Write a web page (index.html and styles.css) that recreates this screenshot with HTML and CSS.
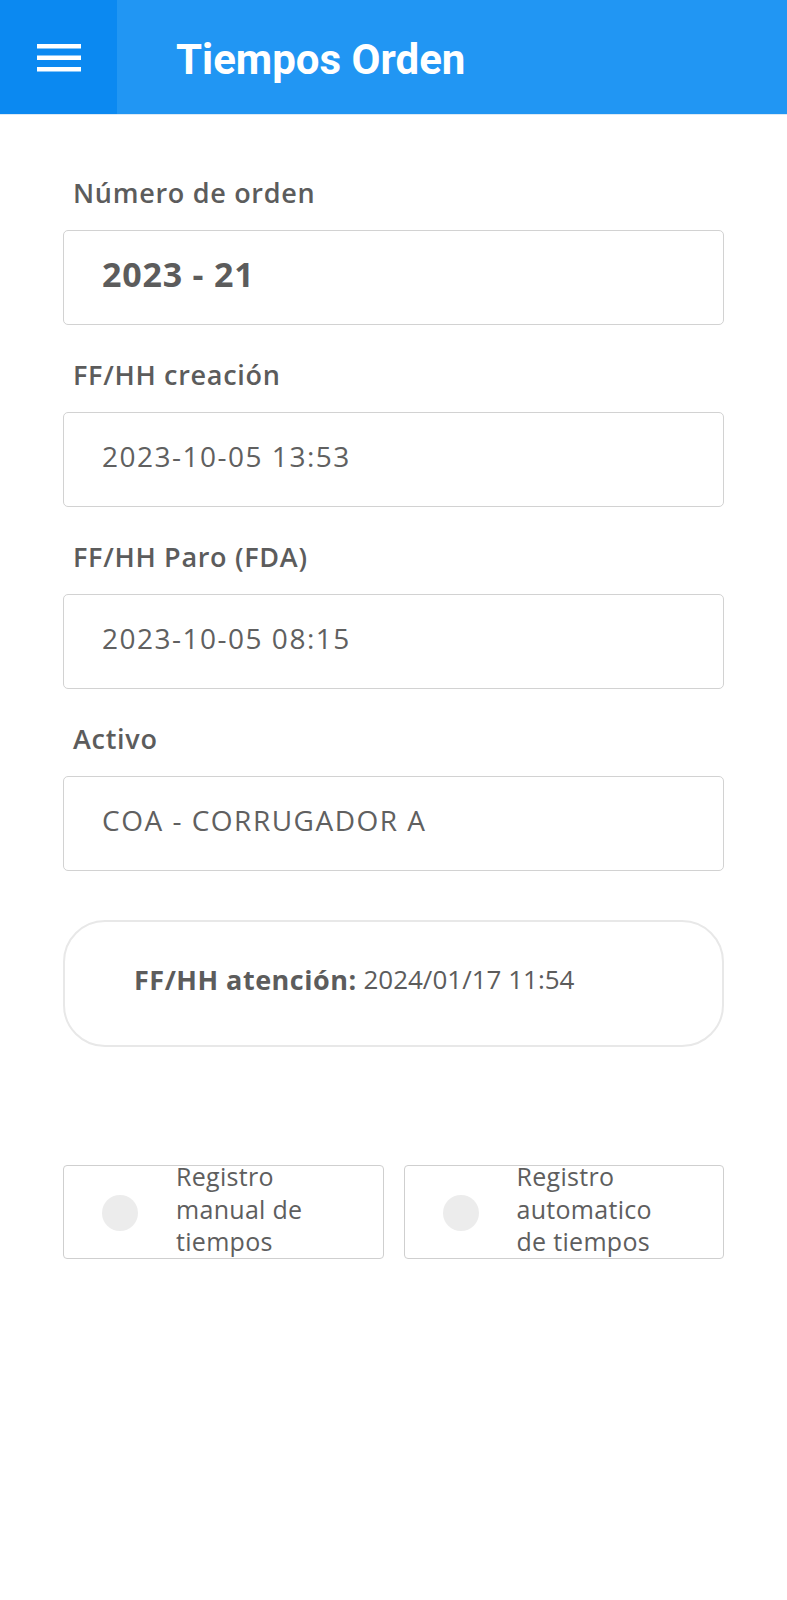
FILE: index.html
```html
<!DOCTYPE html>
<html lang="es">
<head>
<meta charset="utf-8">
<title>Tiempos Orden</title>
<link rel="stylesheet" href="styles.css">
</head>
<body>
<header class="appbar">
  <div class="menu-btn">
    <svg width="44" height="30" viewBox="0 0 44 30"><rect x="0" y="1" width="44" height="4.5" fill="#fff"/><rect x="0" y="12.5" width="44" height="4.5" fill="#fff"/><rect x="0" y="24" width="44" height="4.5" fill="#fff"/></svg>
  </div>
  <div class="title-area"><h1 class="title">Tiempos Orden</h1></div>
</header>
<main class="content">
  <div class="field">
    <div class="label">Número de orden</div>
    <div class="box box-strong">2023 - 21</div>
  </div>
  <div class="field">
    <div class="label">FF/HH creación</div>
    <div class="box">2023-10-05 13:53</div>
  </div>
  <div class="field">
    <div class="label">FF/HH Paro (FDA)</div>
    <div class="box">2023-10-05 08:15</div>
  </div>
  <div class="field">
    <div class="label">Activo</div>
    <div class="box">COA - CORRUGADOR A</div>
  </div>
  <div class="card"><b>FF/HH atención:</b>&nbsp;2024/01/17 11:54</div>
  <div class="options">
    <div class="option"><span class="radio"></span><span class="opt-text">Registro<br>manual de<br>tiempos</span></div>
    <div class="option"><span class="radio"></span><span class="opt-text">Registro<br>automatico<br>de tiempos</span></div>
  </div>
</main>
</body>
</html>
```
FILE: styles.css
```css
html, body { margin: 0; padding: 0; background: #fff; }
body { font-family: "Open Sans", "Noto Sans", sans-serif; color: #606060; }
.appbar { display: flex; height: 114px; border-bottom: 1px solid #dbe9f5; }
.menu-btn { width: 117px; background: #0b89f1; display: flex; align-items: center; justify-content: center; }
.menu-btn svg { display: block; margin-left: 1px; margin-top: 1px; }
.title-area { flex: 1; background: #2196f3; display: flex; align-items: center; }
.title { margin: 4px 0 0 59px; font-family: Roboto, "Liberation Sans", sans-serif; font-weight: 700; font-size: 42px; color: #fff; }
.content { padding: 60px 63px 0; }
.field { margin-bottom: 32px; }
.field:last-of-type { margin-bottom: 0; }
.label { height: 36px; line-height: 36px; font-size: 27px; font-weight: 600; letter-spacing: 0.7px; color: #5c5c5c; margin-left: 10px; margin-bottom: 19px; }
.box { box-sizing: border-box; height: 95px; border: 1px solid #d2d2d2; border-radius: 5px; display: flex; align-items: center; padding-left: 38px; padding-bottom: 7px; font-size: 28px; letter-spacing: 1.5px; color: #606060; }
.box-strong { font-weight: 700; font-size: 34px; letter-spacing: 0.8px; color: #5c5c5c; padding-bottom: 8px; }
.card { box-sizing: border-box; margin-top: 49px; height: 127px; border: 2px solid #e8e8e8; border-radius: 42px; display: flex; align-items: center; padding-left: 69px; padding-bottom: 9px; font-size: 26px; color: #5c5c5c; }
.card b { font-weight: 700; font-size: 27px; letter-spacing: 0.5px; }
.options { margin-top: 118px; display: grid; grid-template-columns: 1fr 1fr; gap: 20px; }
.option { box-sizing: border-box; height: 94px; border: 1px solid #cfcfcf; border-radius: 4px; display: flex; align-items: center; padding-left: 38px; }
.radio { width: 36px; height: 36px; border-radius: 50%; background: #ececec; flex: none; margin-top: 2px; }
.opt-text { margin-left: 38px; margin-top: -6px; font-size: 25px; line-height: 32.5px; letter-spacing: 0.3px; color: #5e5e5e; white-space: nowrap; }
```
